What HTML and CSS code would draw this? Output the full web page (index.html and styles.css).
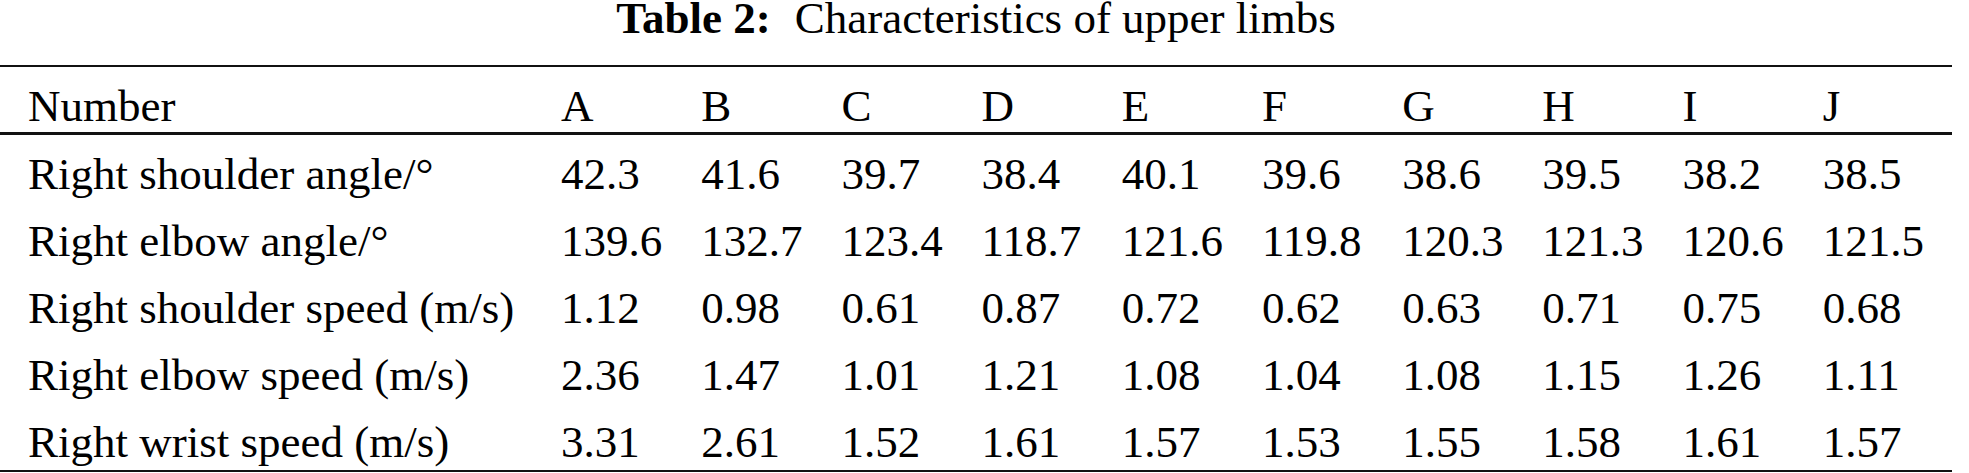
FILE: index.html
```html
<!DOCTYPE html>
<html lang="en">

<head>
    <meta charset="UTF-8">
    <title>Table 2: Characteristics of upper limbs</title>
    <link rel="stylesheet" href="styles.css">
</head>

<body>
    <main class="page">
        <p class="caption"><b class="caption-label">Table 2:</b><span class="caption-text">Characteristics of upper limbs</span></p>
        <table class="limbs">
            <colgroup>
                <col class="col-name">
                <col class="col-val"><col class="col-val"><col class="col-val">
                <col class="col-val"><col class="col-val"><col class="col-val">
                <col class="col-val"><col class="col-val"><col class="col-val">
                <col class="col-last">
            </colgroup>
            <thead>
                <tr>
                    <th>Number</th>
                    <th>A</th><th>B</th><th>C</th><th>D</th><th>E</th>
                    <th>F</th><th>G</th><th>H</th><th>I</th><th>J</th>
                </tr>
            </thead>
            <tbody>
                <tr>
                    <td>Right shoulder angle/°</td>
                    <td>42.3</td><td>41.6</td><td>39.7</td><td>38.4</td><td>40.1</td>
                    <td>39.6</td><td>38.6</td><td>39.5</td><td>38.2</td><td>38.5</td>
                </tr>
                <tr>
                    <td>Right elbow angle/°</td>
                    <td>139.6</td><td>132.7</td><td>123.4</td><td>118.7</td><td>121.6</td>
                    <td>119.8</td><td>120.3</td><td>121.3</td><td>120.6</td><td>121.5</td>
                </tr>
                <tr>
                    <td>Right shoulder speed (m/s)</td>
                    <td>1.12</td><td>0.98</td><td>0.61</td><td>0.87</td><td>0.72</td>
                    <td>0.62</td><td>0.63</td><td>0.71</td><td>0.75</td><td>0.68</td>
                </tr>
                <tr>
                    <td>Right elbow speed (m/s)</td>
                    <td>2.36</td><td>1.47</td><td>1.01</td><td>1.21</td><td>1.08</td>
                    <td>1.04</td><td>1.08</td><td>1.15</td><td>1.26</td><td>1.11</td>
                </tr>
                <tr>
                    <td>Right wrist speed (m/s)</td>
                    <td>3.31</td><td>2.61</td><td>1.52</td><td>1.61</td><td>1.57</td>
                    <td>1.53</td><td>1.55</td><td>1.58</td><td>1.61</td><td>1.57</td>
                </tr>
            </tbody>
        </table>
    </main>
</body>

</html>
```

FILE: styles.css
```css
:root {
    --color-text: #000;
    --color-rule: #111;
    --width-table: 1952px;
}

body {
    margin: 0;
    padding: 0;
    background: #fff;
    color: var(--color-text);
    font-family: "Liberation Serif", "Times New Roman", serif;
    font-size: 45px;
}

.page {
    width: var(--width-table);
}

.caption {
    margin: 0 0 29px;
    line-height: 36px;
    text-align: center;
}

.caption-label {
    font-weight: bold;
    margin-right: 24px;
}

.limbs {
    width: var(--width-table);
    table-layout: fixed;
    border-collapse: collapse;
    border-top: 2px solid var(--color-rule);
    border-bottom: 2px solid var(--color-rule);
}

.col-name {
    width: 561px;
}

.col-val {
    width: 140.2px;
}

.col-last {
    width: 129.2px;
}

.limbs th,
.limbs td {
    padding: 17px 0 5px;
    line-height: 45px;
    text-align: left;
    font-weight: normal;
    white-space: nowrap;
}

.limbs th:first-child,
.limbs td:first-child {
    padding-left: 28px;
}

.limbs thead th {
    padding-bottom: 3px;
}

.limbs thead tr {
    border-bottom: 3px solid var(--color-rule);
}
```
